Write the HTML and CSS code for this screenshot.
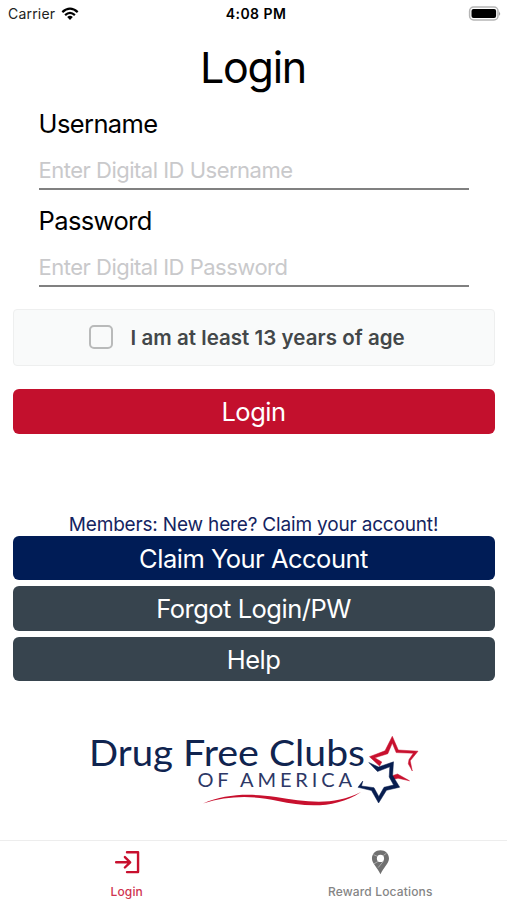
FILE: index.html
```
<!DOCTYPE html>
<html lang="en">
<head>
<meta charset="utf-8">
<title>Login</title>
<link rel="stylesheet" href="styles.css">
</head>
<body>
<header class="status">
  <div class="carrier"><span>Carrier</span>
    <svg width="18" height="14" viewBox="0 0 18 14"><g fill="none" stroke="#000" stroke-width="2.2"><path d="M1.3 5.1Q9 -1.8 16.7 5.1"/><path d="M4.1 8.1Q9 3.6 13.9 8.1"/></g><path d="M6.2 10Q9 7.7 11.8 10L9 12.9Z"/></svg>
  </div>
  <div class="time">4:08 PM</div>
  <svg class="battery" width="33" height="16" viewBox="0 0 33 16"><rect x="1.6" y="1" width="28.4" height="13" rx="4" fill="#fff" stroke="#b5b5b5" stroke-width="1.5"/><rect x="3.5" y="3" width="24.6" height="9" rx="2" fill="#000"/><path d="M31.2 5.2Q33 7.6 31.2 10Z" fill="#888"/></svg>
</header>
<main>
  <h1>Login</h1>
  <form class="fields">
    <label class="user-label" for="user">Username</label>
    <input class="user" id="user" type="text" placeholder="Enter Digital ID Username">
    <label class="pass-label" for="pass">Password</label>
    <input class="pass" id="pass" type="password" placeholder="Enter Digital ID Password">
  </form>
  <div class="age"><span class="box"></span><span class="age-text">I am at least 13 years of age</span></div>
  <button class="btn red">Login</button>
  <p class="members">Members: New here? Claim your account!</p>
  <div class="actions">
    <button class="btn navy">Claim Your Account</button>
    <button class="btn slate">Forgot Login/PW</button>
    <button class="btn slate">Help</button>
  </div>
  <svg class="logo" width="340" height="85" viewBox="85 728 340 85">
    <g class="logo-name">
      <text x="89" y="765.5" textLength="84" lengthAdjust="spacingAndGlyphs">Drug</text>
      <text x="183" y="765.5" textLength="76" lengthAdjust="spacingAndGlyphs">Free</text>
      <text x="269" y="765.5" textLength="96" lengthAdjust="spacingAndGlyphs">Clubs</text>
    </g>
    <g class="logo-sub">
      <text x="197.5" y="787" textLength="31">OF</text>
      <text x="240" y="787" textLength="112">AMERICA</text>
    </g>
    <path d="M203 803.5C225 794 249 793 276 797C305 801.5 333 806.5 361 792C336 809 306 807 278 801C250 795 228 796 203 803.5Z" fill="#c8102e"/>
    <g fill="#c8102e" stroke="#c8102e" stroke-width=".5" stroke-linejoin="round">
      <path d="M392.3 736.3L398.3 750L418 751.2L410.2 760.8L412.3 771L408.3 763.8L409 759.5L413.3 753.2L396.2 752.6L392.3 743L387.8 753.7L374.8 757.8L381.8 762L379.5 766L369.5 756.7L385 750.8Z"/>
      <path d="M391.5 776L397.5 774L409.5 780.8L398 778.2L393 779.5Z"/>
    </g>
    <path fill="#071d4f" stroke="#071d4f" stroke-width=".5" stroke-linejoin="round" d="M368.8 762.5L378.5 767L393.5 761.8L392.6 775.5L399.7 787.2L386.5 790.3L378.6 803L371.5 790.5L358 787.3L362.8 781L361.5 786L374 787.7L378.8 796.5L384 787.3L393.6 785L389.2 777L389.8 766.8L377.5 771.5Z"/>
  </svg>
</main>
<nav class="tabs">
  <a class="tab active">
    <svg width="28" height="26" viewBox="0 0 28 26"><path d="M14 2.4H25.5V23H14M2.7 12.8H17M11.8 7.4L17.3 12.8L11.8 18.2" fill="none" stroke="#c8102e" stroke-width="2.5" stroke-linecap="round" stroke-linejoin="round"/></svg>
    <span class="t-tab1">Login</span>
  </a>
  <a class="tab">
    <svg width="20" height="27" viewBox="0 0 20 27"><path fill="#707070" fill-rule="evenodd" d="M10.5 .3C5.3 .3 1.3 4.1 1.3 9.2C1.3 14.6 7 18.6 10.5 26.3C14 18.6 19.7 14.6 19.7 9.2C19.7 4.1 15.7 .3 10.5 .3ZM10.5 5.2A3.9 3.9 0 1 1 10.5 13A3.9 3.9 0 1 1 10.5 5.2Z"/><path d="M3 5L7.5 7M13.5 6L17 3.5M3.5 15L8 12.3M13.5 12.3L8 19" fill="none" stroke="#ccc" stroke-width=".7"/></svg>
    <span class="t-tab2">Reward Locations</span>
  </a>
</nav>
</body>
</html>
```
FILE: styles.css
```
* { box-sizing: border-box; }
body {
  margin: 0;
  height: 900px;
  overflow: hidden;
  display: flex;
  flex-direction: column;
  background: #fff;
  color: #000;
  font-family: Inter, "Liberation Sans", sans-serif;
}
.status {
  height: 28px;
  padding: 0 6px 0 8px;
  display: grid;
  grid-template-columns: 1fr auto 1fr;
  align-items: center;
  font-size: 14px;
  line-height: 28px;
}
.carrier { display: flex; align-items: center; gap: 6px; color: #222; letter-spacing: .2px; }
.time { font-weight: 600; letter-spacing: .45px; padding-left: 3px; }
.battery { justify-self: end; }
main { flex: 1; padding: 0 12.5px; display: flex; flex-direction: column; }
h1 {
  margin: 13px 0 0;
  height: 52px;
  line-height: 52px;
  font-size: 43px;
  font-weight: 400;
  letter-spacing: -1.3px;
  text-indent: -1px;
  text-align: center;
}
.fields { padding: 0 26px; display: flex; flex-direction: column; }
label { font-size: 25.5px; letter-spacing: -.6px; height: 32px; line-height: 32px; margin-top: 15px; }
.pass-label { margin-top: 15px; }
input {
  height: 35px;
  margin-top: 15px;
  padding: 0 0 4px;
  border: 0;
  border-bottom: 2px solid #808080;
  border-radius: 0;
  background: none;
  font: 22px Inter, "Liberation Sans", sans-serif;
  letter-spacing: -.5px;
}
input::placeholder { color: #c9c9cb; opacity: 1; }
.age {
  height: 57px;
  margin-top: 22px;
  display: flex;
  align-items: center;
  padding-left: 75px;
  background: #f9fafa;
  border: 1px solid #eeefef;
  border-radius: 4px;
}
.box { width: 24px; height: 24px; border: 2px solid #b9baba; border-radius: 5px; margin-right: 18px; margin-top: -2px; }
.age-text { font-size: 20.5px; letter-spacing: .04px; font-weight: 600; color: #434749; white-space: nowrap; }
.btn {
  display: block;
  width: 100%;
  height: 44.5px;
  padding: 1px 0 0;
  border: 0;
  border-radius: 6px;
  color: #fff;
  font: 25.5px/43.5px Inter, "Liberation Sans", sans-serif;
  letter-spacing: -.5px;
}
.red { background: #c3102d; margin-top: 23px; }
.navy { background: #001c56; }
.slate { background: #37444e; }
.members {
  margin: 78px 0 0;
  height: 24px;
  line-height: 26px;
  font-size: 19px;
  letter-spacing: -.17px;
  color: #142461;
  text-align: center;
  white-space: nowrap;
}
.actions { display: flex; flex-direction: column; gap: 6px; }
.logo { margin: 47px 0 0 72.5px; }
.logo-name { font: 37px Lato, sans-serif; fill: #10244f; }
.logo-sub { font: 20px Lato, sans-serif; fill: #2d3866; font-weight: 400; }
.tabs { height: 60px; border-top: 1px solid #ededed; display: flex; }
.tab { flex: 1; height: 59px; padding-top: 9px; display: flex; flex-direction: column; align-items: center; color: #858585; font-size: 12px; font-weight: 500; }
.tab svg { height: 27px; }
.tab span { height: 16px; line-height: 16px; margin-top: 9px; letter-spacing: .15px; }
.active { color: #cf3450; }
```
